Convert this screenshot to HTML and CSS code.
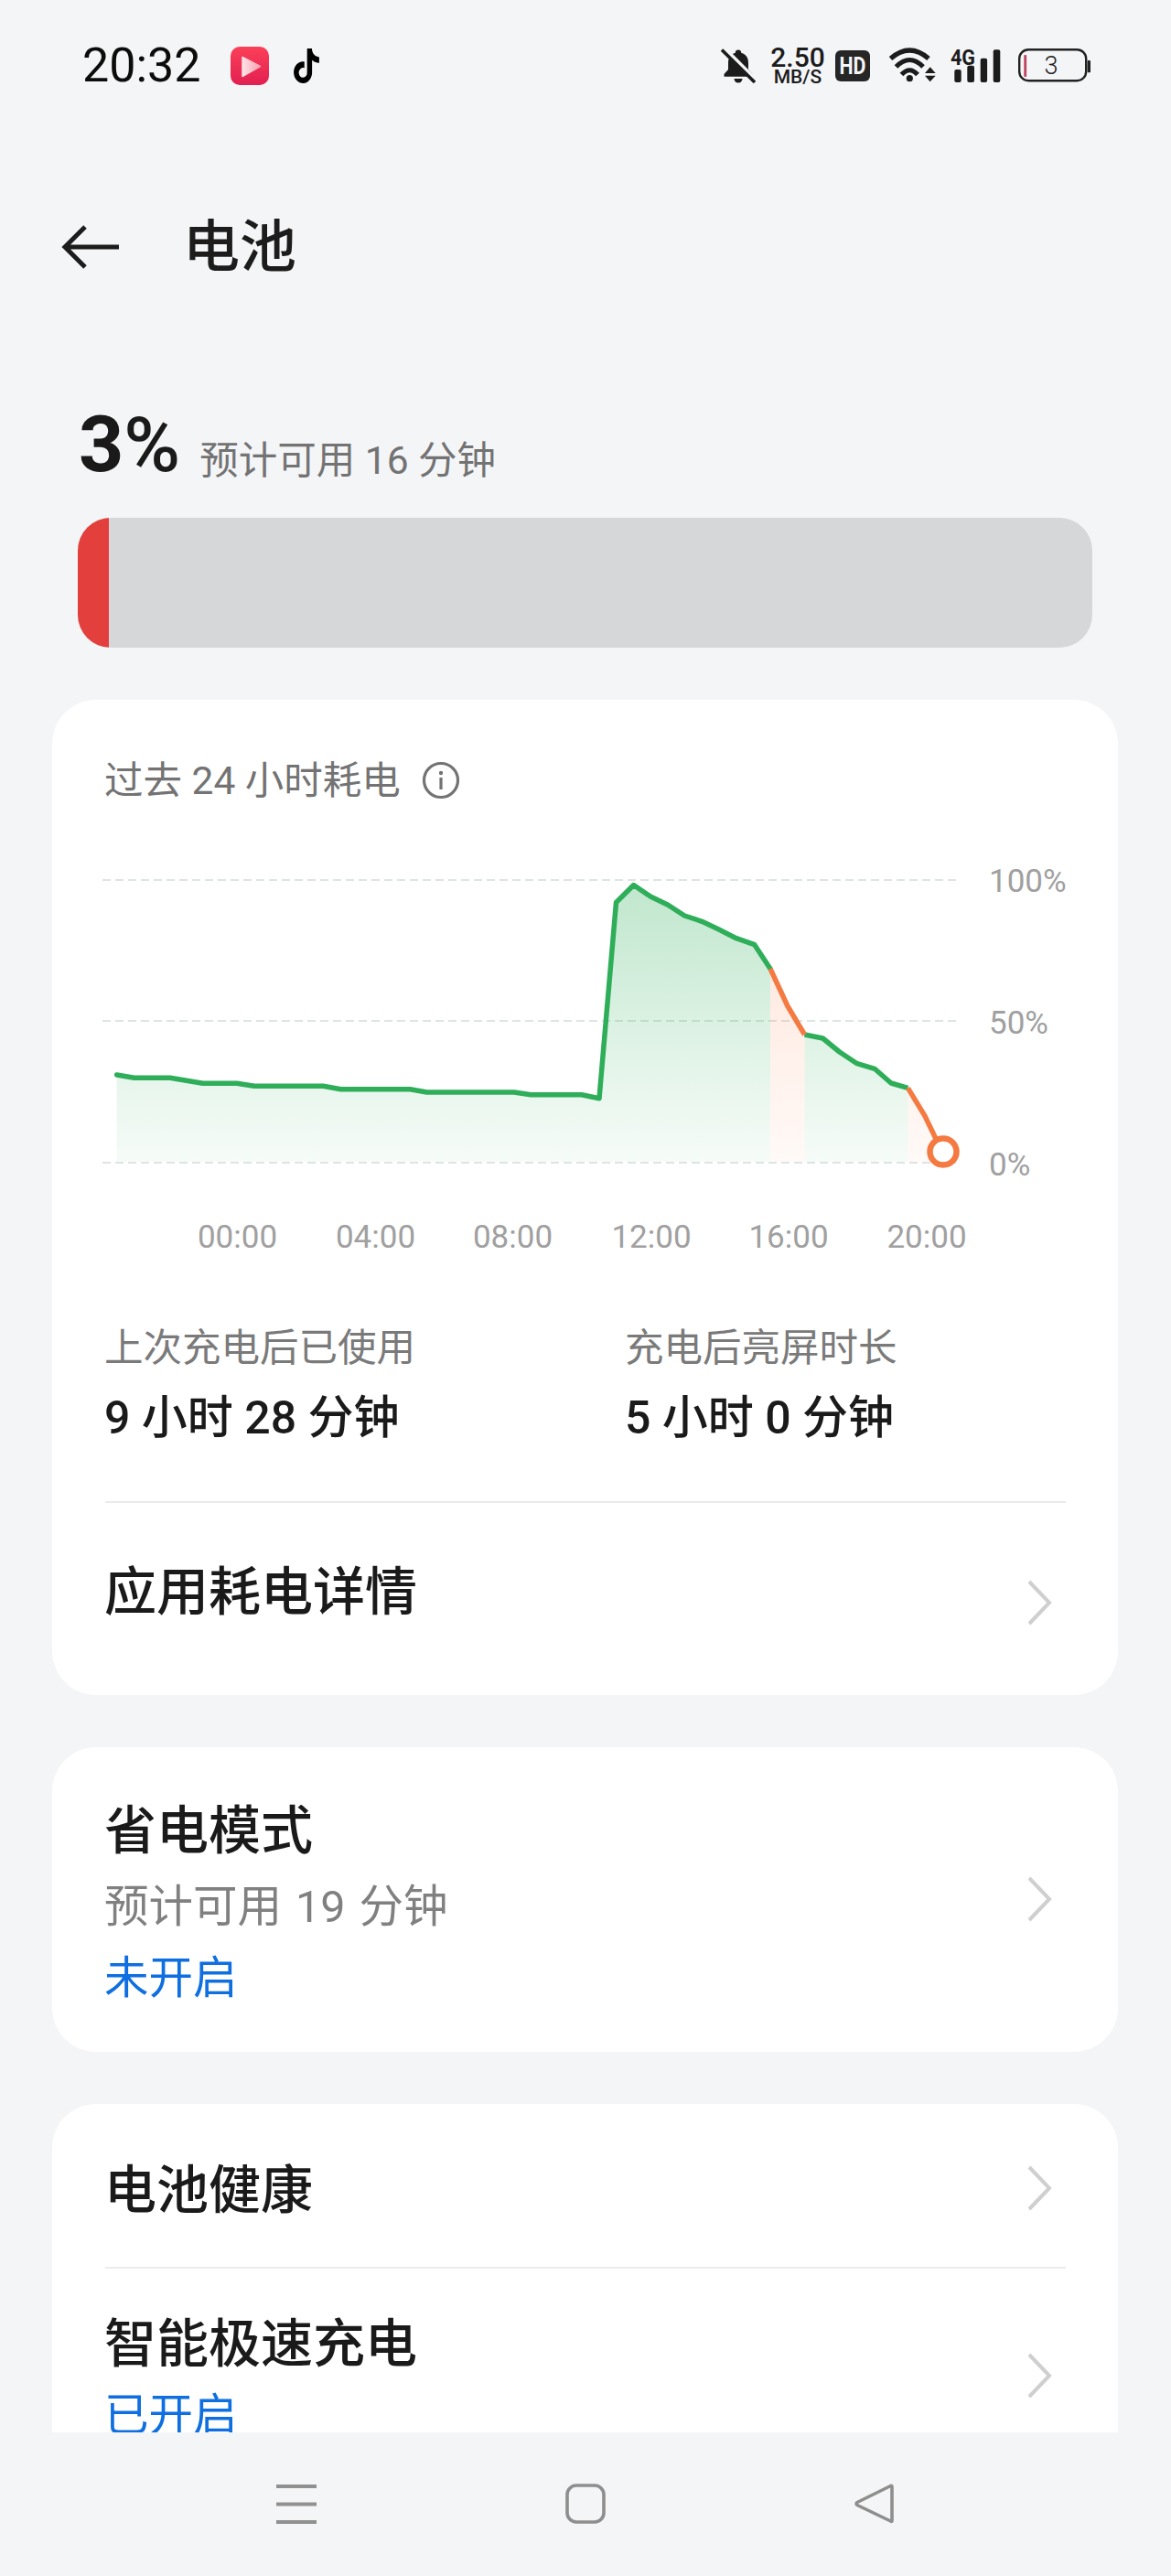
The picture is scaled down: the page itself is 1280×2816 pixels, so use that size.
FILE: index.html
```html
<!DOCTYPE html>
<html lang="zh-CN">
<head>
<meta charset="utf-8">
<title>电池</title>
<link rel="stylesheet" href="styles.css">
</head>
<body>
<div class="screen">
  <main class="content">
    <div class="status">
      <div class="time">20:32</div>
      <svg class="app-red" viewBox="0 0 42 42" width="42" height="42">
        <defs>
          <linearGradient id="redBg" x1="0" y1="0" x2="0" y2="1"><stop offset="0" stop-color="#fb4058"/><stop offset="1" stop-color="#e21f52"/></linearGradient>
          <linearGradient id="playBg" x1="0" y1="0" x2="1" y2="0"><stop offset="0" stop-color="#fde3e6"/><stop offset="1" stop-color="#fb9fb0"/></linearGradient>
        </defs>
        <rect width="42" height="42" rx="10" fill="url(#redBg)"/>
        <path d="M13 11.5 L32.5 21.5 L13 32.5z" fill="url(#playBg)" stroke="url(#playBg)" stroke-width="1.5" stroke-linejoin="round"/>
      </svg>
      <svg class="app-tiktok" viewBox="0 0 24 24" width="32" height="38" preserveAspectRatio="none">
        <path fill="#000" d="M12.525.02c1.31-.02 2.61-.01 3.91-.02.08 1.53.63 3.09 1.75 4.17 1.12 1.11 2.7 1.62 4.24 1.79v4.03c-1.44-.05-2.89-.35-4.2-.97-.57-.26-1.1-.59-1.62-.93-.01 2.92.01 5.84-.02 8.75-.08 1.4-.54 2.79-1.35 3.94-1.31 1.92-3.58 3.17-5.91 3.21-1.43.08-2.86-.31-4.08-1.03-2.02-1.19-3.44-3.37-3.65-5.71-.02-.5-.03-1-.01-1.49.18-1.9 1.12-3.72 2.58-4.96 1.66-1.44 3.98-2.13 6.15-1.72.02 1.48-.04 2.96-.04 4.44-.99-.32-2.15-.23-3.02.37-.63.41-1.11 1.04-1.36 1.75-.21.51-.15 1.07-.14 1.61.24 1.64 1.82 3.02 3.5 2.87 1.12-.01 2.19-.66 2.77-1.61.19-.33.4-.67.41-1.06.1-1.79.06-3.57.07-5.36.01-4.03-.01-8.05.02-12.07z"/>
      </svg>
      <div class="status-right">
        <svg class="ic-bell" viewBox="0 0 38 38" width="38" height="38">
          <path fill="#1c1c1c" d="M19 1.5a3.2 3.2 0 0 1 3.2 3.2c5.8 1.6 7.8 6 7.8 11.3v7l4.5 5v2.8H3.500v-2.800l4.500-5v-7c0-5.300 2-9.700 7.800-11.300A3.200 3.200 0 0 1 19 1.500z"/>
          <path fill="#1c1c1c" d="M14.500 33h9a4.500 4.500 0 0 1-9 0z"/>
          <path stroke="#f4f5f7" stroke-width="4" d="M3.500-.5L39.500 35.500"/>
          <path stroke="#1c1c1c" stroke-width="3.600" d="M1 1.500L37 37"/>
        </svg>
        <div class="speed"><span class="speed-num">2.50</span><span class="speed-unit">MB/S</span></div>
        <svg class="ic-hd" viewBox="0 0 38 34" width="38" height="34">
          <rect width="38" height="34" rx="6" fill="#262626"/>
          <text class="hd-text" x="19" y="26" text-anchor="middle" textLength="29" lengthAdjust="spacingAndGlyphs">HD</text>
        </svg>
        <svg class="ic-wifi" viewBox="0 0 54 40" width="54" height="40">
          <g fill="none" stroke="#1c1c1c" stroke-width="5.200">
            <path d="M3.500 12Q24.300-6 45 12"/>
            <path d="M9.500 21Q24.300 6 39 21"/>
            <path d="M15.500 29.500Q24.300 20 33 29.500"/>
          </g>
          <circle cx="24.300" cy="33.700" r="3.600" fill="#1c1c1c"/>
          <path fill="#1c1c1c" d="M41 28L46.700 21.300 52.700 28zM41 30.700H52.700L46.700 37.300z"/>
        </svg>
        <svg class="ic-signal" viewBox="0 0 55 38" width="55" height="38">
          <text class="sig-text" x="0" y="17.500" textLength="27" lengthAdjust="spacingAndGlyphs">4G</text>
          <g fill="#1c1c1c">
            <rect x="4.300" y="23" width="7.400" height="14" rx="2"/>
            <rect x="18.300" y="18.700" width="7.700" height="18.300" rx="2"/>
            <rect x="32.700" y="10.700" width="7.400" height="26.300" rx="2"/>
            <rect x="46.700" y="1.300" width="7.600" height="35.700" rx="2"/>
          </g>
        </svg>
        <svg class="ic-batt" viewBox="0 0 79 38" width="79" height="38">
          <rect x="1.200" y="1.200" width="73" height="34" rx="10" fill="none" stroke="#222" stroke-width="2.400"/>
          <rect x="75.700" y="13" width="3.300" height="13.300" rx="1" fill="#222"/>
          <rect x="6.300" y="7" width="2.800" height="24" rx="1" fill="#c2405f"/>
          <text class="batt-text" x="36" y="28" text-anchor="middle">3</text>
        </svg>
      </div>
    </div>

    <header class="topbar">
      <svg class="back" viewBox="0 0 66 50" width="66" height="50">
        <path d="M64 25H5M27 3L5 25 27 47" fill="none" stroke="#1c1c1c" stroke-width="5"/>
      </svg>
      <h1 class="title">电池</h1>
    </header>

    <section class="summary">
      <div class="level"><span class="level-num">3</span><span class="level-pct">%</span></div>
      <div class="remain">预计可用 16 分钟</div>
    </section>

    <div class="bar"><div class="bar-fill"></div></div>

    <section class="card card-usage">
      <div class="usage-head">
        <span>过去 24 小时耗电</span>
        <svg class="info" viewBox="0 0 42 42" width="42" height="42">
          <circle cx="21" cy="21" r="18.500" fill="none" stroke="#737373" stroke-width="3.200"/>
          <circle cx="21" cy="13" r="2.200" fill="#737373"/>
          <rect x="19.400" y="18" width="3.200" height="13" fill="#737373"/>
        </svg>
      </div>

      <svg class="chart" viewBox="57 930 1165 450" width="1165" height="450">
        <defs>
          <linearGradient id="greenFill" gradientUnits="userSpaceOnUse" x1="0" y1="967" x2="0" y2="1272">
            <stop offset="0" stop-color="#2fae5a" stop-opacity=".3"/>
            <stop offset="1" stop-color="#2fae5a" stop-opacity=".04"/>
          </linearGradient>
          <linearGradient id="orangeFill" gradientUnits="userSpaceOnUse" x1="0" y1="1060" x2="0" y2="1272">
            <stop offset="0" stop-color="#ff7a45" stop-opacity=".16"/>
            <stop offset="1" stop-color="#ff7a45" stop-opacity=".04"/>
          </linearGradient>
        </defs>
        <g stroke="#dde5e2" stroke-width="2" stroke-dasharray="9 5" fill="none">
          <path d="M112 962H1046"/>
          <path d="M112 1116H1046"/>
          <path d="M112 1271H1046"/>
        </g>
        <path fill="url(#greenFill)" d="M127.600 1175L146.700 1178.300 186 1178.300 221.700 1184.300 258.800 1184.300 278 1187.300 353.300 1187.300 372.500 1190.700 448.300 1190.700 466.600 1194 562 1194 580.300 1196.700 635.800 1196.700 655 1200.700 673.500 986.500 692.600 967.500 711 980 730.200 989.300 748.200 1001 767.300 1007.300 785.700 1016 804.800 1025.700 824.700 1032.700 842 1059V1270H127.600z"/>
        <path fill="url(#greenFill)" d="M879.500 1131L899.400 1135 917.700 1150 936.900 1162.700 956 1168.300 974 1184 992.400 1189.300V1270H879.500z"/>
        <path fill="url(#orangeFill)" d="M842 1059L861 1100 879.500 1131V1270H842z"/>
        <path fill="url(#orangeFill)" d="M992.400 1189.300L1011 1220 1024 1245 1030 1270H992.400z"/>
        <path fill="none" stroke="#2fae5a" stroke-width="5.500" stroke-linejoin="round" stroke-linecap="round" d="M127.600 1175L146.700 1178.300 186 1178.300 221.700 1184.300 258.800 1184.300 278 1187.300 353.300 1187.300 372.500 1190.700 448.300 1190.700 466.600 1194 562 1194 580.300 1196.700 635.800 1196.700 655 1200.700 673.500 986.500 692.600 967.500 711 980 730.200 989.300 748.200 1001 767.300 1007.300 785.700 1016 804.800 1025.700 824.700 1032.700 842 1059"/>
        <path fill="none" stroke="#2fae5a" stroke-width="5.500" stroke-linejoin="round" d="M879.500 1131L899.400 1135 917.700 1150 936.900 1162.700 956 1168.300 974 1184 992.400 1189.300"/>
        <path fill="none" stroke="#f47a42" stroke-width="5.500" stroke-linejoin="round" d="M842 1059L861 1100 879.500 1131"/>
        <path fill="none" stroke="#f47a42" stroke-width="5.500" stroke-linejoin="round" d="M992.400 1189.300L1011 1220 1024 1247"/>
        <circle cx="1031" cy="1259" r="14.500" fill="#fff" stroke="#f47a42" stroke-width="6.500"/>
        <g class="axis">
          <text x="1081" y="975">100%</text>
          <text x="1081" y="1130">50%</text>
          <text x="1081" y="1285">0%</text>
        </g>
        <g class="axis axis-x">
          <text x="259.500" y="1364">00:00</text>
          <text x="410.500" y="1364">04:00</text>
          <text x="560.500" y="1364">08:00</text>
          <text x="712" y="1364">12:00</text>
          <text x="862" y="1364">16:00</text>
          <text x="1013" y="1364">20:00</text>
        </g>
      </svg>

      <div class="stats">
        <div class="stat">
          <div class="stat-label">上次充电后已使用</div>
          <div class="stat-value">9 小时 28 分钟</div>
        </div>
        <div class="stat">
          <div class="stat-label">充电后亮屏时长</div>
          <div class="stat-value">5 小时 0 分钟</div>
        </div>
      </div>
      <div class="divider"></div>
      <div class="row row-details">
        <div class="row-title">应用耗电详情</div>
        <svg class="chev" viewBox="0 0 28 50" width="28" height="50"><path d="M3 2L25 25 3 48" fill="none" stroke="#cfcfcf" stroke-width="4"/></svg>
      </div>
    </section>

    <section class="card card-saver">
      <div class="row">
        <div>
          <div class="row-title">省电模式</div>
          <div class="row-sub">预计可用 19 分钟</div>
          <div class="row-state">未开启</div>
        </div>
        <svg class="chev" viewBox="0 0 28 50" width="28" height="50"><path d="M3 2L25 25 3 48" fill="none" stroke="#cfcfcf" stroke-width="4"/></svg>
      </div>
    </section>

    <section class="card card-health">
      <div class="row row-health">
        <div class="row-title">电池健康</div>
        <svg class="chev" viewBox="0 0 28 50" width="28" height="50"><path d="M3 2L25 25 3 48" fill="none" stroke="#cfcfcf" stroke-width="4"/></svg>
      </div>
      <div class="divider"></div>
      <div class="row row-fast">
        <div>
          <div class="row-title">智能极速充电</div>
          <div class="row-state row-state-fast">已开启</div>
        </div>
        <svg class="chev" viewBox="0 0 28 50" width="28" height="50"><path d="M3 2L25 25 3 48" fill="none" stroke="#cfcfcf" stroke-width="4"/></svg>
      </div>
    </section>
  </main>

  <nav class="navbar">
    <svg viewBox="0 0 44 44" width="44" height="44"><path d="M0 3H44M0 22.500H44M0 42H44" stroke="#909090" stroke-width="4"/></svg>
    <svg viewBox="0 0 44 44" width="44" height="44"><rect x="2" y="2" width="40" height="40" rx="10" fill="none" stroke="#8e8e8e" stroke-width="3.600"/></svg>
    <svg viewBox="0 0 44 44" width="44" height="44"><path d="M41 3.500V40.500Q41 42 39.500 41L3 23.500Q1 22 3 20.500L39.500 2.500Q41 2 41 3.500z" fill="none" stroke="#8e8e8e" stroke-width="3.600" stroke-linejoin="round"/></svg>
  </nav>
</div>
</body>
</html>
```
FILE: styles.css
```css
* { box-sizing: border-box; }
html, body { margin: 0; padding: 0; }
body {
  background: #f4f5f7;
  color: #1c1c1c;
  font-family: Roboto, "Noto Sans CJK SC", sans-serif;
}
svg { overflow: visible; }
.screen { width: 1280px; height: 2816px; display: flex; flex-direction: column; overflow: hidden; }
.content { height: 2659px; overflow: hidden; flex: none; }

.status { height: 144px; display: flex; align-items: center; padding: 0 88px 0 90px; }
.time { font-size: 52px; line-height: 60px; color: #0c0c0c; width: 162px; }
.app-tiktok { margin-left: 25px; }
.status-right { margin-left: auto; display: flex; align-items: center; }
.speed { margin-left: 16px; width: 60px; display: flex; flex-direction: column; align-items: center; color: #1c1c1c; }
.speed-num { font-size: 30px; line-height: 24px; font-weight: 500; }
.speed-unit { font-size: 21px; line-height: 18px; font-weight: 500; }
.ic-hd { margin-left: 11px; }
.hd-text { font: 700 25px Roboto, sans-serif; fill: #f4f5f7; }
.ic-wifi { margin-left: 19px; }
.ic-signal { margin-left: 15px; }
.sig-text { font: 700 24px Roboto, sans-serif; fill: #1c1c1c; }
.ic-batt { margin-left: 19px; }
.batt-text { font: 300 27px Roboto, sans-serif; fill: #222; }

.topbar { margin-top: 70px; height: 112px; display: flex; align-items: center; padding-left: 66px; }
.title { margin: 2px 0 0 68px; font-size: 62px; line-height: 84px; font-weight: 500; color: #1c1c1c; }

.summary { margin-top: 110px; height: 100px; padding-left: 86px; display: flex; align-items: baseline; gap: 21px; }
.level { line-height: 100px; white-space: nowrap; }
.level-num { font-size: 86px; font-weight: 700; color: #1a1a1a; }
.level-pct { font-size: 84px; font-weight: 500; color: #1a1a1a; }
.remain { font-size: 42.500px; line-height: 60px; color: #737373; position: relative; top: 3px; }

.bar { margin: 30px 86px 0 85px; height: 142px; border-radius: 36px; background: #d6d7d9; overflow: hidden; }
.bar-fill { width: 33.500px; height: 100%; background: #e33f3d; }

.card { margin: 0 58px 0 57px; background: #fff; border-radius: 48px; }
.card-usage { margin-top: 57px; height: 1088px; padding-top: 59px; }
.usage-head { height: 60px; padding-left: 57px; display: flex; align-items: center; gap: 24px; font-size: 42.500px; line-height: 60px; color: #737373; }
.info { margin-top: -3px; margin-left: -1px; }
.chart { display: block; margin-top: 46px; }
.axis { font: 400 35px Roboto, sans-serif; fill: #a0a0a0; }
.axis-x { text-anchor: middle; }

.stats { margin-top: 64px; padding-left: 57px; display: grid; grid-template-columns: 569px 1fr; }
.stat-label { font-size: 42.500px; line-height: 60px; color: #7a7a7a; }
.stat-value { margin-top: 14px; font-size: 50px; line-height: 64px; font-weight: 500; color: #1a1a1a; }
.divider { height: 2px; margin: 0 57px 0 58px; background: #ebebeb; }
.stats + .divider { margin-top: 59px; }

.row { display: flex; align-items: center; justify-content: space-between; padding: 0 72px 0 57px; }
.row-title { font-size: 57px; line-height: 60px; font-weight: 500; color: #1a1a1a; }
.row-sub { margin-top: 23px; font-size: 48.500px; line-height: 60px; word-spacing: 3px; color: #808080; }
.row-state { margin-top: 18px; font-size: 48.500px; line-height: 60px; color: #0f6fe0; }

.row-details { height: 211px; }
.row-details .row-title { margin-bottom: 15px; }
.row-details .chev { margin-top: 6px; }

.card-saver { margin-top: 57px; height: 333px; padding-top: 62px; }
.card-saver .row .chev { margin-top: -13px; }

.card-health { margin-top: 57px; height: 420px; }
.row-health { height: 178px; }
.row-health .row-title { margin-top: 12px; }
.row-health .chev { margin-top: 6px; }
.row-fast { padding-top: 53px; align-items: flex-start; }
.row-fast .chev { margin-top: 39px; }
.row-state-fast { margin-top: 18px; }

.navbar { flex: 1; padding: 56px 0 0 302px; display: flex; align-items: flex-start; gap: 272px; background: #f4f5f7; }
```
